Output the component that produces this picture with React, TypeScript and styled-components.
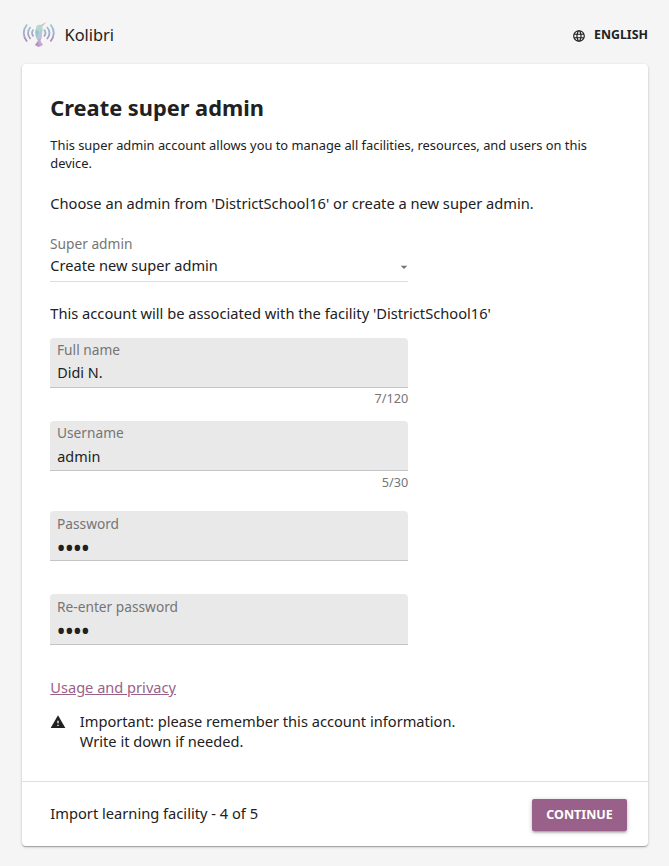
import React from 'react';
import styled, { createGlobalStyle } from 'styled-components';
import { MdLanguage, MdWarning, MdArrowDropDown } from 'react-icons/md';

const GlobalStyle = createGlobalStyle`
  *, *::before, *::after { box-sizing: border-box; }
  body {
    margin: 0;
    background: #f5f5f5;
    color: #212121;
    font: 14.66px/20px "Noto Sans", sans-serif;
  }
  p, h1 { margin: 0; }
`;

const Page = styled.div`
  min-height: 866px;
  padding: 0 21px 20px 22px;
  display: flex;
  flex-direction: column;
`;

const Header = styled.header`
  height: 64px;
  display: flex;
  align-items: center;
  justify-content: space-between;
  padding-top: 6px;
`;

const Brand = styled.div`
  display: flex;
  align-items: center;
  gap: 8.5px;
  font-size: 16.4px;
  line-height: 24px;
`;

const LanguageButton = styled.button`
  display: flex;
  align-items: center;
  gap: 8px;
  padding: 0;
  border: 0;
  background: none;
  color: inherit;
  font: bold 12.4px/16px "Noto Sans", sans-serif;
  svg { width: 14px; height: 14px; margin-top: 2px; }
`;

const Card = styled.main`
  height: 782px;
  display: flex;
  flex-direction: column;
  background: #fff;
  border-radius: 4px;
  box-shadow: 0 1px 3px rgba(0, 0, 0, 0.2), 0 1px 1px rgba(0, 0, 0, 0.14), 0 2px 1px -1px rgba(0, 0, 0, 0.12);
`;

const Content = styled.div`
  flex: 1;
  padding: 28px 28px 0 28.3px;
`;

const Title = styled.h1`
  font-size: 21.8px;
  line-height: 32px;
  font-weight: 700;
`;

const Description = styled.p`
  margin-top: 12px;
  font-size: 12.86px;
  line-height: 18px;
`;

const Paragraph = styled.p<{ $top: number }>`
  margin-top: ${(p) => p.$top}px;
  line-height: 20px;
`;

const Select = styled.div`
  width: 358px;
  height: 48px;
  margin-top: 21px;
  border-bottom: 1px solid #dedede;
`;

const SelectValue = styled.div`
  height: 22px;
  display: flex;
  align-items: center;
  justify-content: space-between;
  font-size: 14.6px;
  svg { width: 16px; height: 16px; margin: 4px -4px 0 0; color: #757575; }
`;

const Label = styled.label`
  display: block;
  margin-left: -0.3px;
  color: #757575;
  font-size: 13.72px;
  line-height: 20px;
`;

const Field = styled.div<{ $top: number; $height: number; $inset: number }>`
  width: 358px;
  height: ${(p) => p.$height}px;
  margin-top: ${(p) => p.$top}px;
  padding: ${(p) => p.$inset}px 7px 0;
  background: #e9e9e9;
  border-bottom: 1px solid #c4c4c4;
  border-radius: 4px 4px 0 0;
`;

const Input = styled.input<{ $top: number }>`
  display: block;
  width: 100%;
  height: 24px;
  margin-top: ${(p) => p.$top}px;
  padding: 0;
  border: 0;
  outline: 0;
  background: none;
  color: #212121;
  font: 14.4px/24px "Noto Sans", sans-serif;
  &[type='password'] {
    margin-left: -0.7px;
    font-size: 24.5px;
    letter-spacing: -1.15px;
  }
`;

const Counter = styled.div<{ $top: number }>`
  width: 358px;
  height: 20px;
  margin-top: ${(p) => p.$top}px;
  text-align: right;
  color: #757575;
  font-size: 12.7px;
`;

const PrivacyLink = styled.a`
  display: block;
  width: max-content;
  margin-top: 32px;
  color: #996189;
  font-size: 14.6px;
  line-height: 20px;
  text-decoration: underline;
`;

const Notice = styled.div`
  display: flex;
  gap: 13.5px;
  margin-top: 14px;
  font-size: 14.64px;
  svg { width: 16px; height: 16px; margin-top: 3px; }
`;

const Footer = styled.footer`
  height: 65px;
  display: flex;
  align-items: center;
  justify-content: space-between;
  padding: 1px 21px 0 28.3px;
  border-top: 1px solid #dedede;
`;

const FooterText = styled.span`
  padding-bottom: 3px;
`;

const ContinueButton = styled.button`
  width: 95px;
  height: 32px;
  padding: 0;
  border: 0;
  border-radius: 2px;
  background: #996189;
  color: #fff;
  font: bold 12.5px/32px "Noto Sans", sans-serif;
  box-shadow: 0 1px 5px rgba(0, 0, 0, 0.2), 0 2px 2px rgba(0, 0, 0, 0.14), 0 3px 1px -2px rgba(0, 0, 0, 0.12);
`;

function Logo() {
  return (
    <svg width="34" height="28" viewBox="0 0 34 28" fill="none">
      <defs>
        <linearGradient id="wave" x1="0" y1="3" x2="0" y2="22" gradientUnits="userSpaceOnUse">
          <stop stopColor="#9cc4cc" />
          <stop offset="0.5" stopColor="#a3adcd" />
          <stop offset="1" stopColor="#a587b7" />
        </linearGradient>
      </defs>
      <g stroke="url(#wave)" strokeWidth="1.8">
        <path d="M5 3.500Q-1.500 12 5 20.500M8.500 6Q3.500 12 8.500 18M11.500 8.500Q8.500 12 11.500 15.500" />
        <path d="M28.500 3.500Q35 12 28.500 20.500M25 6Q30 12 25 18M22 8.500Q25 12 22 15.500" />
      </g>
      <path d="M17.500 4.500L24.500 1L20 6Z" fill="#c9cab9" />
      <path d="M14 7Q15 3 18.500 4Q21 5 20.500 9L19.500 17L15 18Q12.500 13 14 7Z" fill="#b1d8d2" />
      <path d="M14 8L17 11L15 18Q12.500 13 14 8Z" fill="#98c5cb" />
      <path d="M17 11L20.500 8L19.500 17L15 18Z" fill="#b9c7dc" />
      <path d="M15 18L19.500 17L18.500 20L21 24L17 26L13 24L16 20Z" fill="#c7a6d1" />
      <path d="M16 20L17 26L13 24Z" fill="#ad91c7" />
    </svg>
  );
}

interface TextFieldProps {
  label: string;
  value: string;
  top: number;
  type?: string;
  height?: number;
  inset?: number;
  inputTop?: number;
}

function TextField({ label, value, top, type = 'text', height = 50, inset = 2, inputTop = 1 }: TextFieldProps) {
  const id = label.toLowerCase().replace(/ /g, '-');
  return (
    <Field $top={top} $height={height} $inset={inset}>
      <Label htmlFor={id}>{label}</Label>
      <Input id={id} type={type} defaultValue={value} $top={inputTop} />
    </Field>
  );
}

export default function App() {
  return (
    <Page>
      <GlobalStyle />
      <Header>
        <Brand><Logo />Kolibri</Brand>
        <LanguageButton><MdLanguage />ENGLISH</LanguageButton>
      </Header>
      <Card>
        <Content>
          <Title>Create super admin</Title>
          <Description>
            This super admin account allows you to manage all facilities, resources, and users on this<br />device.
          </Description>
          <Paragraph $top={21}>Choose an admin from 'DistrictSchool16' or create a new super admin.</Paragraph>
          <Select>
            <Label>Super admin</Label>
            <SelectValue>Create new super admin<MdArrowDropDown /></SelectValue>
          </Select>
          <Paragraph $top={21}>This account will be associated with the facility 'DistrictSchool16'</Paragraph>
          <TextField label="Full name" value="Didi N." top={15} />
          <Counter $top={0}>7/120</Counter>
          <TextField label="Username" value="admin" top={13} inputTop={2} />
          <Counter $top={1}>5/30</Counter>
          <TextField label="Password" value="1234" type="password" top={19} inset={3} />
          <TextField label="Re-enter password" value="1234" type="password" top={33} height={51} inset={3} />
          <PrivacyLink>Usage and privacy</PrivacyLink>
          <Notice>
            <MdWarning />
            <p>Important: please remember this account information.<br />Write it down if needed.</p>
          </Notice>
        </Content>
        <Footer>
          <FooterText>Import learning facility - 4 of 5</FooterText>
          <ContinueButton>CONTINUE</ContinueButton>
        </Footer>
      </Card>
    </Page>
  );
}
